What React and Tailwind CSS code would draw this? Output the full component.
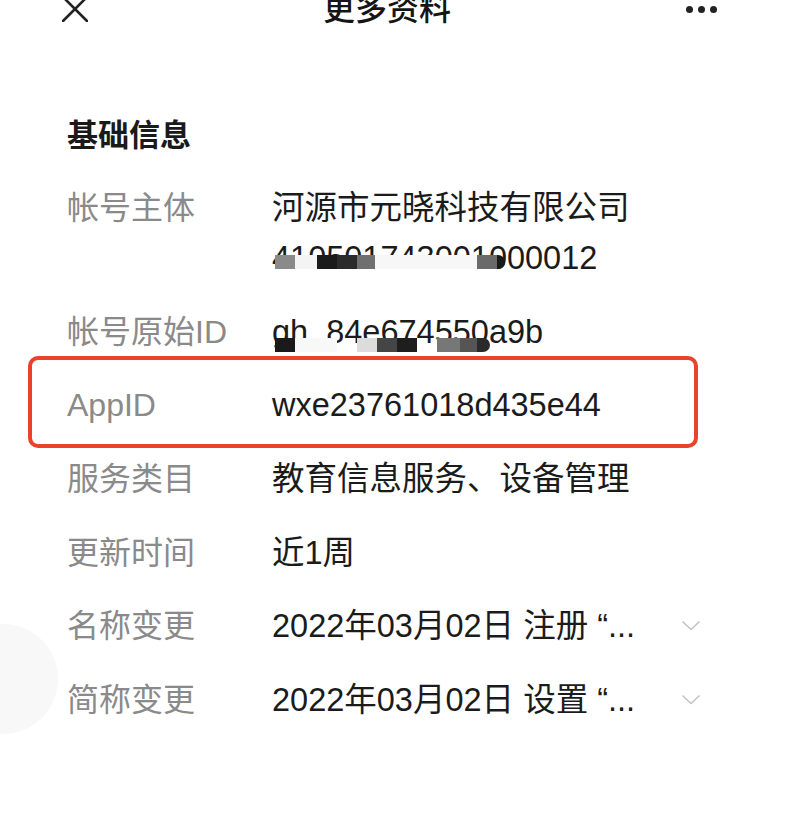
import React from 'react';

const font = { fontFamily: '"Liberation Sans", "Noto Sans CJK SC", sans-serif' };

function Chevron() {
    return (
        <svg width="20" height="12" viewBox="0 0 20 12" className="shrink-0">
            <path d="M1.5 1.5 L10 9.5 L18.5 1.5" fill="none" stroke="#c4c4c4" strokeWidth="1.6" />
        </svg>
    );
}

function Row({ label, children, chevron, className = '' }) {
    return (
        <div className={`relative flex items-start ${className}`}>
            <div className="w-[205px] shrink-0 text-[32px] text-[#8a8a8a] leading-[50px]">{label}</div>
            <div className="flex-1 min-w-0 text-[32.5px] text-[#1b1b1b] leading-[50px]">{children}</div>
            {chevron && (
                <div className="h-[50px] flex items-center">
                    <Chevron />
                </div>
            )}
        </div>
    );
}

// mosaic blocks hiding part of the text
function Mosaic({ blocks, top, height }) {
    return (
        <div className="absolute inset-x-0" style={{ top, height }}>
            {blocks.map(([l, w, c, r], i) => (
                <div
                    key={i}
                    className={`absolute top-0 h-full ${r ? 'rounded-r-full' : ''}`}
                    style={{ left: l, width: w, background: c }}
                />
            ))}
        </div>
    );
}

export default function App() {
    return (
        <div className="relative w-[786px] h-[816px] overflow-hidden bg-white" style={font}>
            {/* faint floating circle on the left */}
            <div className="absolute -left-[52px] top-[624px] w-[110px] h-[110px] rounded-full bg-[#f8f8f8]"></div>

            {/* HEADER */}
            <div className="flex items-center justify-between h-[40px] -mt-[11px] pl-[62px] pr-[68px]">
                <svg width="26" height="26" viewBox="0 0 26 26">
                    <path d="M1 1 L25 25 M25 1 L1 25" stroke="#222" strokeWidth="2.6" strokeLinecap="round" />
                </svg>
                <div className="text-[32px] font-medium text-[#151515] leading-[40px]">更多资料</div>
                <div className="flex items-center gap-[5px] w-[32px]">
                    <span className="w-[7px] h-[7px] rounded-full bg-[#222]"></span>
                    <span className="w-[7px] h-[7px] rounded-full bg-[#222]"></span>
                    <span className="w-[7px] h-[7px] rounded-full bg-[#222]"></span>
                </div>
            </div>

            <div className="pl-[67px] pr-[85px] mt-[87px]">
                <h2 className="text-[31px] font-bold text-[#1a1a1a] leading-[40px]">基础信息</h2>

                <div className="mt-[27px] flex flex-col gap-[23.7px]">
                    <Row label="帐号主体">
                        <div>河源市元晓科技有限公司</div>
                        <div className="relative">
                            410501743001000012
                            <Mosaic
                                top={22}
                                height={14}
                                blocks={[
                                    [3, 20, '#8a8a8a'],
                                    [23, 22, '#f4f4f4'],
                                    [45, 20, '#1a1a1a'],
                                    [65, 20, '#2b2b2b'],
                                    [85, 18, '#707070'],
                                    [103, 102, '#f7f7f7'],
                                    [205, 20, '#6a6a6a'],
                                    [225, 8, '#1a1a1a', true],
                                ]}
                            />
                        </div>
                    </Row>

                    <Row label="帐号原始ID">
                        <div className="relative">
                            gh_84e674550a9b
                            <Mosaic
                                top={31}
                                height={14}
                                blocks={[
                                    [3, 20, '#1a1a1a'],
                                    [23, 42, '#f8f8f8'],
                                    [85, 20, '#dcdcdc'],
                                    [105, 20, '#454545'],
                                    [125, 20, '#1e1e1e'],
                                    [165, 23, '#777777'],
                                    [188, 17, '#555555'],
                                    [205, 13, '#2a2a2a', true],
                                ]}
                            />
                        </div>
                    </Row>

                    <Row label="AppID">
                        {/* red annotation frame */}
                        <div className="absolute -left-[39px] -top-[24px] w-[670px] h-[92px] border-4 border-[#e8432d] rounded-[10px]"></div>
                        wxe23761018d435e44
                    </Row>

                    <Row label="服务类目">教育信息服务、设备管理</Row>
                    <Row label="更新时间">近1周</Row>
                    <Row label="名称变更" chevron>
                        2022年03月02日 注册 “...
                    </Row>
                    <Row label="简称变更" chevron>
                        2022年03月02日 设置 “...
                    </Row>
                </div>
            </div>
        </div>
    );
}
